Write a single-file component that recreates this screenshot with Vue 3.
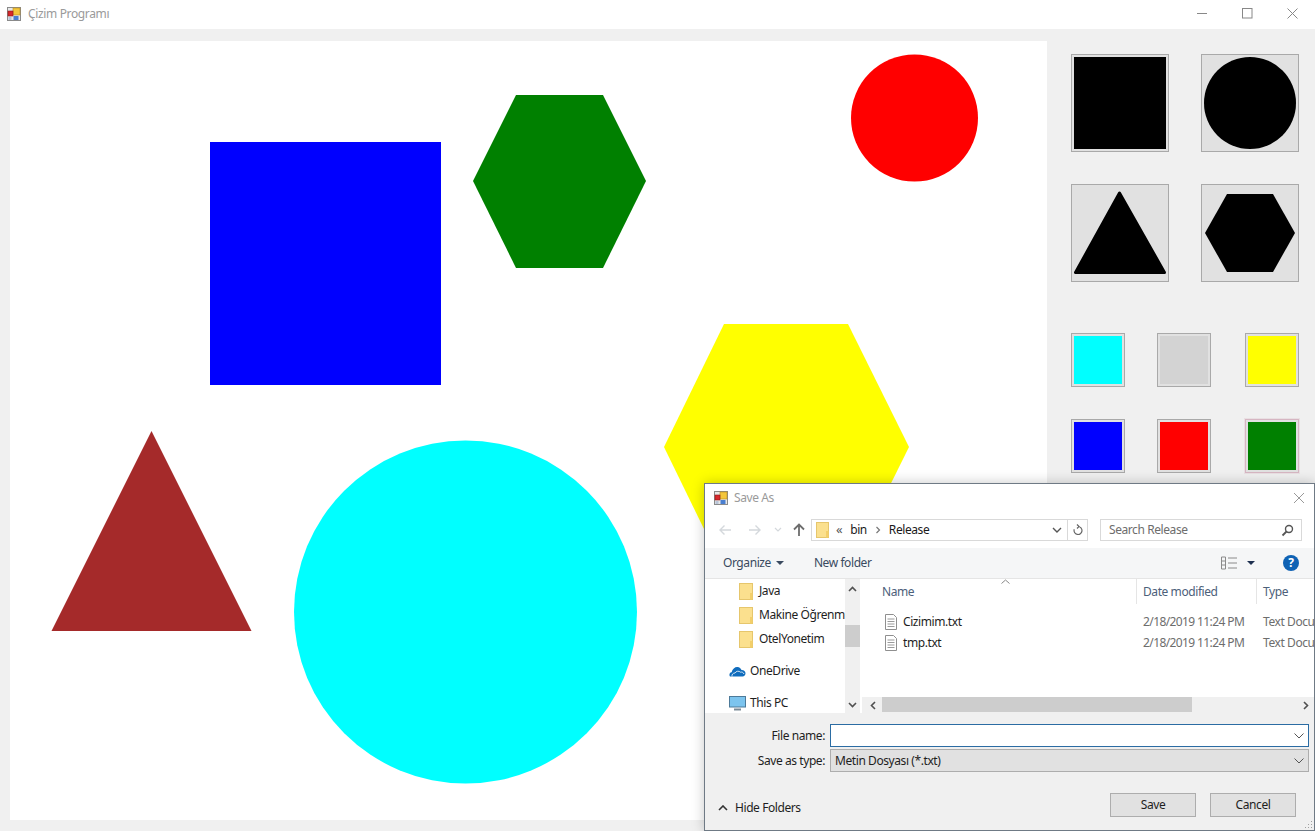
<script setup>
const bigTools = ['square', 'circle', 'triangle', 'hexagon']
const colors = [
  { c: '#00ffff' }, { c: '#d3d3d3' }, { c: '#ffff00' },
  { c: '#0000ff' }, { c: '#ff0000' }, { c: '#008000', active: true }
]
const tree = [
  { label: 'Java', icon: 'folder' },
  { label: 'Makine Öğrenmesi', icon: 'folder' },
  { label: 'OtelYonetim', icon: 'folder' },
  { label: 'OneDrive', icon: 'cloud' },
  { label: 'This PC', icon: 'pc' }
]
const files = [
  { name: 'Cizimim.txt', date: '2/18/2019 11:24 PM', type: 'Text Document' },
  { name: 'tmp.txt', date: '2/18/2019 11:24 PM', type: 'Text Document' }
]
</script>

<template>
  <div class="window">
    <header class="titlebar">
      <svg class="appicon" width="14" height="14" viewBox="0 0 14 14">
        <rect x=".5" y=".5" width="13" height="13" fill="#e8e8e8" stroke="#8a8a8a" />
        <rect x="6" y="1" width="7" height="7" fill="#f4c63c" stroke="#b98a1c" stroke-width=".6" />
        <rect x="1" y="4" width="5" height="5" fill="#d8282c" stroke="#8c1a1a" stroke-width=".6" />
        <rect x="6.5" y="9" width="5" height="4" fill="#4a7fd0" />
        <rect x="1.5" y="10" width="3" height="3" fill="#b8c4d8" />
      </svg>
      <span class="apptitle">Çizim Programı</span>
      <div class="winbtns">
        <svg width="11" height="11" viewBox="0 0 11 11"><path d="M0 5.500h10" stroke="#888" fill="none" /></svg>
        <svg width="11" height="11" viewBox="0 0 11 11"><rect x=".5" y=".5" width="9.500" height="9.500" stroke="#888" fill="none" /></svg>
        <svg width="11" height="11" viewBox="0 0 11 11"><path d="M.5.500l10 10M10.500.500l-10 10" stroke="#888" fill="none" /></svg>
      </div>
    </header>

    <main class="main">
      <svg class="canvas" width="1037" height="779" viewBox="0 0 1037 779">
        <rect x="200" y="101" width="231" height="243" fill="#0000ff" />
        <polygon points="506,54 593,54 636,140 593,227 506,227 463,140" fill="#008000" />
        <circle cx="904.5" cy="77" r="63.5" fill="#ff0000" />
        <polygon points="714,283 838,283 899,406 838,529 714,529 654,406" fill="#ffff00" />
        <polygon points="141.5,390 241.5,590 41.5,590" fill="#a52a2a" />
        <circle cx="455.5" cy="571" r="171.5" fill="#00ffff" />
      </svg>

      <aside class="panel">
        <div class="bigs">
          <button v-for="t in bigTools" :key="t" class="tool big">
            <svg width="92" height="92" viewBox="0 0 92 92">
              <rect v-if="t === 'square'" width="92" height="92" />
              <circle v-else-if="t === 'circle'" cx="46" cy="46" r="46" />
              <polygon v-else-if="t === 'triangle'" points="45.5,6 1.5,85.5 90.5,85.5" stroke="#000" stroke-width="3" stroke-linejoin="round" />
              <polygon v-else points="1,46 23,7 69,7 91,46 69,85 23,85" />
            </svg>
          </button>
        </div>
        <div class="smalls">
          <button v-for="s in colors" :key="s.c" class="tool small" :class="{ active: s.active }">
            <span class="swatch" :style="{ background: s.c }"></span>
          </button>
        </div>
      </aside>
    </main>

    <section class="dialog">
      <div class="dtitle">
        <svg class="appicon" width="14" height="14" viewBox="0 0 14 14">
          <rect x=".5" y=".5" width="13" height="13" fill="#e8e8e8" stroke="#8a8a8a" />
          <rect x="6" y="1" width="7" height="7" fill="#f4c63c" stroke="#b98a1c" stroke-width=".6" />
          <rect x="1" y="4" width="5" height="5" fill="#d8282c" stroke="#8c1a1a" stroke-width=".6" />
          <rect x="6.5" y="9" width="5" height="4" fill="#4a7fd0" />
          <rect x="1.5" y="10" width="3" height="3" fill="#b8c4d8" />
        </svg>
        <span class="dtitletext">Save As</span>
        <svg class="dclose" width="12" height="12" viewBox="0 0 12 12"><path d="M1 1l10 10M11 1L1 11" stroke="#999" fill="none" /></svg>
      </div>

      <div class="navrow">
        <div class="navbtns">
          <svg width="14" height="12" viewBox="0 0 14 12"><path d="M13 6H2M6.500 1.500L2 6l4.500 4.500" stroke="#d4d8dc" stroke-width="1.400" fill="none" /></svg>
          <svg width="14" height="12" viewBox="0 0 14 12"><path d="M1 6h11M7.500 1.500L12 6l-4.500 4.500" stroke="#d4d8dc" stroke-width="1.400" fill="none" /></svg>
          <svg width="8" height="6" viewBox="0 0 8 6"><path d="M1 1l3 3 3-3" stroke="#d4d8dc" stroke-width="1.200" fill="none" /></svg>
          <svg width="12" height="14" viewBox="0 0 12 14"><path d="M6 13V2M1 6.500L6 1.500l5 5" stroke="#6d6d6d" stroke-width="1.800" fill="none" /></svg>
        </div>
        <div class="address">
          <svg class="fold" width="13" height="16" viewBox="0 0 13 16">
            <rect x=".5" y=".5" width="12" height="15" fill="#fbe08e" stroke="#e6c66c" />
            <rect x="10" y="9" width="2.500" height="6.500" fill="#f3cf6a" />
          </svg>
          <span class="crumb ch">«</span>
          <span class="crumb">bin</span>
          <svg width="6" height="8" viewBox="0 0 6 8"><path d="M1.500 1l3 3-3 3" stroke="#777" stroke-width="1.200" fill="none" /></svg>
          <span class="crumb">Release</span>
          <svg class="addrchev" width="10" height="6" viewBox="0 0 10 6"><path d="M1 1l4 4 4-4" stroke="#555" stroke-width="1.400" fill="none" /></svg>
          <span class="addrrefresh">
            <svg width="12" height="12" viewBox="0 0 12 12"><path d="M6 2.500a4 4 0 1 1-3.800 2.800M5 .5l2 2-2 2" stroke="#666" stroke-width="1.200" fill="none" /></svg>
          </span>
        </div>
        <div class="search">
          <span>Search Release</span>
          <svg width="13" height="13" viewBox="0 0 13 13"><circle cx="8" cy="5" r="3.500" stroke="#555" stroke-width="1.400" fill="none" /><path d="M5.500 7.500L1.500 11.500" stroke="#555" stroke-width="1.800" /></svg>
        </div>
      </div>

      <div class="toolbar">
        <span class="tbtn">Organize</span>
        <i class="caret"></i>
        <span class="tbtn newfolder">New folder</span>
        <svg class="viewicon" width="17" height="14" viewBox="0 0 17 14">
          <path d="M.5 1h4v12h-4zM.5 5h4M.5 9h4M7 2h9M7 7h9M7 12h9" stroke="#8a8a8a" fill="none" />
        </svg>
        <i class="caret dark"></i>
        <span class="help">?</span>
      </div>

      <div class="content">
        <nav class="navpane">
          <ul class="tree">
            <li v-for="n in tree" :key="n.label" class="treeitem" :class="n.icon">
              <svg v-if="n.icon === 'folder'" width="14" height="17" viewBox="0 0 14 17">
                <rect x=".5" y=".5" width="13" height="16" fill="#fbe08e" stroke="#e6c66c" />
                <rect x="11" y="10" width="2.500" height="6.500" fill="#f3cf6a" />
              </svg>
              <svg v-else-if="n.icon === 'cloud'" width="17" height="11" viewBox="0 0 17 11">
                <path d="M1 10.500c-1.200-1.800-.4-4 1.600-4.300C3.500 2.800 6 .8 8.500 1c2 .2 3.400 1.400 4 3 2.200-.2 4 1.300 4 3.300 0 1.800-1.200 3.200-3 3.200z" fill="#0f6cbd" />
                <path d="M3 10.500c-.4-2 1-3.500 3-3.500 1-2 4-2.400 5.500-.8 1.500-.5 3 .4 3.500 1.800" stroke="#fff" stroke-width=".8" fill="none" />
              </svg>
              <svg v-else width="17" height="15" viewBox="0 0 17 15">
                <rect x=".5" y=".5" width="16" height="10.500" fill="#7cc4ee" stroke="#4d7a99" />
                <path d="M5 13.500h7" stroke="#7a8a96" stroke-width="2" />
              </svg>
              <span>{{ n.label }}</span>
            </li>
          </ul>
          <div class="vscroll">
            <svg width="9" height="6" viewBox="0 0 9 6"><path d="M1 5l3.500-3.500L8 5" stroke="#505050" stroke-width="1.600" fill="none" /></svg>
            <span class="vthumb"></span>
            <svg width="9" height="6" viewBox="0 0 9 6"><path d="M1 1l3.500 3.500L8 1" stroke="#505050" stroke-width="1.600" fill="none" /></svg>
          </div>
        </nav>

        <div class="filepane">
          <div class="fileinner">
            <div class="filehead">
              <span class="colname">Name</span>
              <span class="coldate">Date modified</span>
              <span class="coltype">Type</span>
              <svg class="sortcaret" width="9" height="5" viewBox="0 0 9 5"><path d="M.5 4.500L4.500 1l4 3.500" stroke="#888" fill="none" /></svg>
            </div>
            <div v-for="f in files" :key="f.name" class="filerow">
              <span class="colname fname">
                <svg width="12" height="16" viewBox="0 0 12 16">
                  <path d="M.5.500h8l3 3v12H.5z" fill="#fff" stroke="#8f8f8f" />
                  <path d="M2.500 5h7M2.500 7.500h7M2.500 10h7M2.500 12.500h7" stroke="#9a9a9a" />
                </svg>
                {{ f.name }}
              </span>
              <span class="coldate fmeta">{{ f.date }}</span>
              <span class="coltype fmeta">{{ f.type }}</span>
            </div>
          </div>
          <div class="hscroll">
            <svg width="6" height="9" viewBox="0 0 6 9"><path d="M5 1L1.500 4.500 5 8" stroke="#505050" stroke-width="1.600" fill="none" /></svg>
            <span class="hthumb"></span>
            <svg width="6" height="9" viewBox="0 0 6 9"><path d="M1 1l3.500 3.500L1 8" stroke="#505050" stroke-width="1.600" fill="none" /></svg>
          </div>
        </div>
      </div>

      <footer class="dfoot">
        <div class="formrow first">
          <label>File name:</label>
          <div class="field input">
            <svg width="10" height="6" viewBox="0 0 10 6"><path d="M.5.500L5 5 9.500.500" stroke="#555" fill="none" /></svg>
          </div>
        </div>
        <div class="formrow">
          <label>Save as type:</label>
          <div class="field select">
            <span>Metin Dosyası (*.txt)</span>
            <svg width="10" height="6" viewBox="0 0 10 6"><path d="M.5.500L5 5 9.500.500" stroke="#555" fill="none" /></svg>
          </div>
        </div>
        <div class="actions">
          <span class="hide">
            <svg width="10" height="6" viewBox="0 0 10 6"><path d="M1 5l4-4 4 4" stroke="#333" stroke-width="1.600" fill="none" /></svg>
            Hide Folders
          </span>
          <button class="dbtn save">Save</button>
          <button class="dbtn">Cancel</button>
        </div>
        <svg class="grip" width="9" height="9" viewBox="0 0 9 9"><path d="M7 1h1v1H7zM4 4h1v1H4zM7 4h1v1H7zM1 7h1v1H1zM4 7h1v1H4zM7 7h1v1H7z" fill="#a0a0a0" /></svg>
      </footer>
    </section>
  </div>
</template>

<style>
html, body { margin: 0; overflow: hidden; }
</style>

<style scoped>
.window {
  position: relative;
  width: 1315px;
  height: 831px;
  overflow: hidden;
  background: #f0f0f0;
  font-family: "Noto Sans", "Open Sans", sans-serif;
  font-size: 12px;
  letter-spacing: -0.42px;
  color: #1e1e1e;
}
.titlebar {
  height: 29px;
  background: #fff;
  display: flex;
  align-items: center;
  padding-left: 7px;
  box-sizing: border-box;
  padding-bottom: 2px;
}
.apptitle { margin-left: 7px; color: #9a9a9a; letter-spacing: -0.35px; }
.winbtns {
  margin-left: auto;
  display: flex;
  gap: 34px;
  padding-right: 17px;
}
.main { display: flex; align-items: flex-start; padding: 12px 0 0 10px; }
.canvas { display: block; background: #fff; flex: none; }
.panel { margin: 13px 0 0 24px; width: 228px; }
.bigs { display: grid; grid-template-columns: 98px 98px; justify-content: space-between; row-gap: 32px; }
.smalls { display: grid; grid-template-columns: 54px 54px 54px; column-gap: 32px; row-gap: 32px; margin-top: 51px; }
.smalls > :nth-child(3n) { margin-left: 2px; }
.tool {
  display: block;
  padding: 2px;
  margin: 0;
  border: 1px solid #a9a9a9;
  background: #e1e1e1;
  box-sizing: border-box;
}
.tool svg { display: block; }
.big { width: 98px; height: 98px; }
.small { width: 54px; height: 54px; }
.small.active { border-color: #d6b6c2; box-shadow: 0 0 0 1px #e9e0e3; }
.swatch { display: block; width: 48px; height: 48px; }

.dialog {
  position: absolute;
  left: 704px;
  top: 483px;
  width: 611px;
  height: 348px;
  box-sizing: border-box;
  border: 1px solid #6f7a85;
  background: #fff;
  box-shadow: 0 0 12px rgba(0, 0, 0, .22);
  display: flex;
  flex-direction: column;
}
.dtitle { height: 29px; display: flex; align-items: center; padding: 0 0 2px 9px; box-sizing: border-box; flex: none; }
.dtitletext { margin-left: 6px; color: #9a9a9a; }
.dclose { margin-left: auto; margin-right: 9px; }
.navrow { height: 35px; flex: none; display: flex; align-items: flex-start; padding-top: 6px; box-sizing: border-box; }
.navbtns { display: flex; align-items: center; height: 22px; padding-left: 13px; gap: 16px; width: 106px; box-sizing: border-box; }
.navbtns svg:nth-child(3) { margin-left: -4px; margin-right: -5px; }
.address {
  width: 277px;
  height: 22px;
  box-sizing: border-box;
  border: 1px solid #d9d9d9;
  display: flex;
  align-items: center;
  padding-left: 4px;
  gap: 8px;
  background: #fff;
  color: #1a1a1a;
}
.crumb { position: relative; top: -1px; }
.crumb.ch { margin-left: -1px; color: #555; font-size: 13px; }
.addrchev { margin-left: auto; margin-right: 1px; }
.addrrefresh { width: 19px; height: 20px; border-left: 1px solid #d9d9d9; display: flex; align-items: center; justify-content: center; margin-left: -4px; }
.search {
  width: 202px;
  height: 22px;
  margin-left: 12px;
  box-sizing: border-box;
  border: 1px solid #d9d9d9;
  display: flex;
  align-items: center;
  justify-content: space-between;
  padding: 0 7px 0 8px;
  color: #6d6d6d;
}
.search span { position: relative; top: -1px; }
.toolbar {
  height: 31px;
  flex: none;
  box-sizing: border-box;
  background: #f5f6f7;
  border-bottom: 1px solid #e5e5e5;
  display: flex;
  align-items: center;
  padding-left: 18px;
  color: #3a4a60;
}
.tbtn { position: relative; top: -1px; }
.caret {
  display: block;
  width: 0; height: 0;
  border-left: 4px solid transparent;
  border-right: 4px solid transparent;
  border-top: 4px solid #3a4a60;
  margin-left: 5px;
}
.newfolder { margin-left: 30px; }
.viewicon { margin-left: auto; }
.caret.dark { margin-left: 9px; border-top-color: #1e3050; }
.help {
  width: 16px; height: 16px;
  margin: 0 15px 0 28px;
  border-radius: 50%;
  background: #0f62b4;
  color: #fff;
  font-weight: 700;
  font-size: 12px;
  line-height: 16px;
  text-align: center;
  letter-spacing: 0;
}
.content { height: 134px; flex: none; display: flex; overflow: hidden; }
.navpane { width: 155px; flex: none; display: flex; }
.tree { list-style: none; margin: 0; padding: 0; width: 140px; overflow: hidden; }
.treeitem { display: flex; align-items: center; white-space: nowrap; gap: 6px; }
.treeitem svg { flex: none; }
.treeitem span { position: relative; top: -1px; }
.treeitem.folder { height: 24px; padding-left: 34px; }
.treeitem.folder:nth-child(3) { margin-bottom: 8px; }
.treeitem.cloud, .treeitem.pc { height: 24px; padding-left: 24px; gap: 4px; }
.treeitem.cloud { margin-bottom: 8px; }
.vscroll {
  width: 15px;
  background: #f0f0f0;
  position: relative;
  display: flex;
  flex-direction: column;
  align-items: center;
  justify-content: space-between;
  padding: 7px 0 5px;
  box-sizing: border-box;
}
.vthumb { position: absolute; left: 0; right: 0; top: 46px; height: 22px; background: #cdcdcd; }
.filepane { flex: 1; margin-left: 2px; display: flex; flex-direction: column; min-width: 0; }
.fileinner { flex: 1; overflow: hidden; }
.filehead { position: relative; height: 25px; display: flex; align-items: center; color: #4c607a; margin-bottom: 7px; }
.sortcaret { position: absolute; left: 139px; top: 0; }
.colname { display: flex; align-items: center; width: 274px; padding-left: 20px; box-sizing: border-box; flex: none; }
.coldate { width: 120px; padding-left: 6px; box-sizing: border-box; border-left: 1px solid #e5e5e5; flex: none; line-height: 25px; }
.coltype { padding-left: 6px; border-left: 1px solid #e5e5e5; flex: none; white-space: nowrap; line-height: 25px; }
.filerow { display: flex; align-items: center; height: 21px; }
.filerow .coldate, .filerow .coltype { border-left-color: transparent; line-height: 21px; }
.fname { padding-left: 23px; gap: 6px; }
.fmeta { color: #6d6d6d; }
.filerow .coldate { letter-spacing: -0.6px; }
.hscroll {
  height: 16px;
  flex: none;
  background: #f0f0f0;
  display: flex;
  align-items: center;
  justify-content: space-between;
  padding: 0 5px 0 8px;
  position: relative;
}
.hthumb { position: absolute; left: 20px; width: 310px; top: 0; bottom: 1px; background: #cdcdcd; }
.dfoot {
  flex: 1;
  background: #f0f0f0;
  position: relative;
  padding-top: 11px;
  box-sizing: border-box;
}
.formrow { display: flex; align-items: center; height: 23px; margin-bottom: 2px; }
.formrow label { width: 125px; text-align: right; padding-right: 5px; box-sizing: border-box; flex: none; }
.field {
  width: 479px;
  height: 23px;
  box-sizing: border-box;
  display: flex;
  align-items: center;
  justify-content: flex-end;
  padding: 0 4px;
}
.field.input { background: #fff; border: 1px solid #2b6ca3; }
.field.select { background: #e1e1e1; border: 1px solid #adadad; justify-content: space-between; }
.actions { display: flex; align-items: center; margin-top: 21px; height: 24px; padding-left: 13px; }
.hide { display: flex; align-items: center; gap: 7px; margin-right: auto; margin-top: 5px; }
.dbtn {
  width: 86px;
  height: 24px;
  padding: 0 0 2px;
  border: 1px solid #adadad;
  background: #e1e1e1;
  font: inherit;
  letter-spacing: inherit;
  color: #1e1e1e;
}
.dbtn.save { margin-right: 14px; }
.dbtn:last-child { margin-right: 18px; }
.grip { position: absolute; right: 1px; bottom: 1px; }
</style>
